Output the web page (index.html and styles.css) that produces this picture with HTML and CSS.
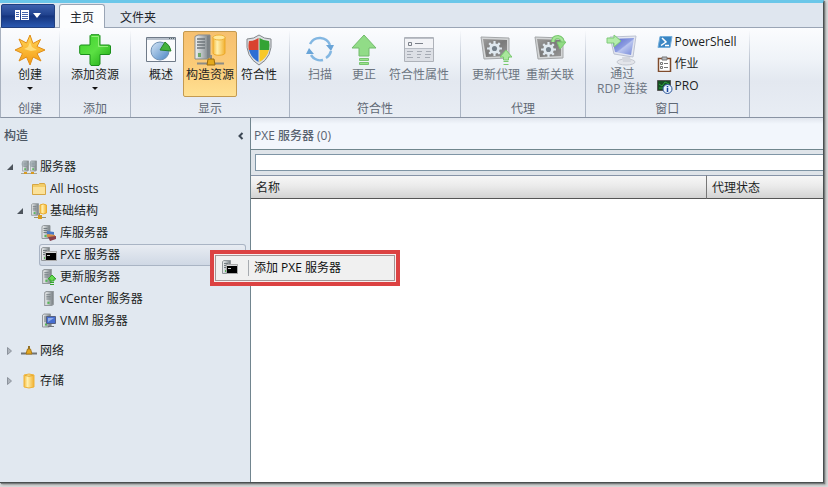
FILE: index.html
```html
<!DOCTYPE html>
<html lang="zh-CN">
<head>
<meta charset="utf-8">
<meta name="viewport" content="width=device-width, initial-scale=1">
<title>PXE 服务器</title>
<link rel="stylesheet" href="styles.css">
</head>
<body>
<svg class="sprite" aria-hidden="true">
  <defs>
    <linearGradient id="g-sun" x1="0" y1="0" x2="0" y2="1"><stop offset="0" stop-color="#ffd75a"/><stop offset="1" stop-color="#f59a12"/></linearGradient>
    <linearGradient id="g-green" x1="0" y1="0" x2="1" y2="1"><stop offset="0" stop-color="#3fd32c"/><stop offset=".5" stop-color="#5be043"/><stop offset="1" stop-color="#17a30f"/></linearGradient>
    <linearGradient id="g-blue" x1="0" y1="0" x2="1" y2="1"><stop offset="0" stop-color="#d5e6f6"/><stop offset="1" stop-color="#4c86c4"/></linearGradient>
    <linearGradient id="g-metal" x1="0" y1="0" x2="1" y2="0"><stop offset="0" stop-color="#f1f3f4"/><stop offset=".5" stop-color="#b4babd"/><stop offset="1" stop-color="#737a7e"/></linearGradient>
    <linearGradient id="g-disk" x1="0" y1="0" x2="1" y2="0"><stop offset="0" stop-color="#f6b93a"/><stop offset=".35" stop-color="#fff0ae"/><stop offset="1" stop-color="#f2b130"/></linearGradient>
    <linearGradient id="g-screen" x1="0" y1="0" x2="1" y2="1"><stop offset="0" stop-color="#5568c8"/><stop offset=".5" stop-color="#8d9de2"/><stop offset=".55" stop-color="#b9c5ef"/><stop offset="1" stop-color="#7488d8"/></linearGradient>
    <linearGradient id="g-dark" x1="0" y1="0" x2="1" y2="1"><stop offset="0" stop-color="#9b9b9b"/><stop offset=".5" stop-color="#7b7b7b"/><stop offset="1" stop-color="#979797"/></linearGradient>
    <symbol id="tower" viewBox="0 0 9 14">
      <path d="M.5 1.500 2 .5h6.500v12L7 13.500H.5z" fill="url(#g-metal)" stroke="#92989c"/>
      <path d="M2 3.500h4M2 5.500h4M2 7.500h4" stroke="#737c81"/><path d="M3 10h2v2H3z" fill="#55b857"/>
    </symbol>
    <symbol id="gear" viewBox="0 0 16 16">
      <path d="M7 1h2v2.200l1.600.6L12.200 2.200l1.500 1.600-1.500 1.500.7 1.700H15v2h-2.100l-.7 1.700 1.500 1.500-1.500 1.500-1.600-1.500-1.600.7V15H7v-2.100l-1.600-.7-1.600 1.500-1.500-1.500 1.500-1.500L3.100 9H1V7h2.100l.7-1.700-1.500-1.500 1.500-1.600 1.600 1.600L7 3.200z" fill="#dfe8ef"/>
      <circle cx="8" cy="8" r="2.400" fill="#75818b"/>
    </symbol>
  </defs>
</svg>

<div class="window">
  <nav class="tabs" aria-label="功能区">
    <button class="file-button" type="button" aria-label="文件">
      <svg width="26" height="12" viewBox="0 0 26 12"><path fill="#fff" d="M0 1h5v10H0zM6 1h8v10H6z"/><path stroke="#4464ac" d="M1 3.500h3M1 5.500h3M1 7.500h3M7 3.500h6M7 5.500h6M7 7.500h6M7 9.500h6"/><path fill="#fff" d="M18 4h8l-4 5z"/></svg>
    </button>
    <button class="tab tab-active" type="button">主页</button>
    <button class="tab" type="button">文件夹</button>
  </nav>

  <div class="ribbon">
    <section class="group">
      <div class="tools">
        <button class="tool" type="button">
          <svg class="icon" viewBox="0 0 32 32"><path d="m16 1 3 8.500L26.500 5.500 23 12.500 31 16l-8 3.500 4 7.500-8-4L16 31l-3.500-8L5 27l3.500-7.500L1 16l7.500-3.500L5 5l7.500 4z" fill="url(#g-sun)" stroke="#e08d18"/><path d="m16 8 2 5 5 3-6 1-7-2 4-2z" fill="#ffe995" opacity=".7"/></svg>
          <span>创建</span><i class="caret"></i>
        </button>
      </div>
      <h2>创建</h2>
    </section>
    <section class="group">
      <div class="tools">
        <button class="tool" type="button">
          <svg class="icon" viewBox="0 0 32 32"><path d="M12 .7h8l1 1V11h9.500l1 1v7l-1 1.500H21V30l-1 1.500h-8L11 30v-9.500H1.500L.7 19v-7l.8-1H11V1.700z" fill="url(#g-green)" stroke="#1b8f1b"/><path d="M12.500 2.500h7v10h9.500" fill="none" stroke="#a5f38b" opacity=".8"/></svg>
          <span>添加资源</span><i class="caret"></i>
        </button>
      </div>
      <h2>添加</h2>
    </section>
    <section class="group">
      <div class="tools">
        <button class="tool" type="button">
          <svg class="icon" viewBox="0 0 32 32"><path d="M1.500 3.500h29v24h-29z" fill="#fafbfd" stroke="#6f7a88"/><path d="M2 4h28v2H2z" fill="#b7c0cb"/><path d="M24 4.500h1m1 0h1m1 0h1" stroke="#566"/><circle cx="15" cy="17" r="9" fill="url(#g-blue)" stroke="#6f91b5"/><path d="M15 16 20 8q5 3 6 9z" fill="#44b23c" stroke="#27852a"/></svg>
          <span>概述</span>
        </button>
        <button class="tool tool-pressed" type="button" aria-pressed="true">
          <svg class="icon" viewBox="0 0 32 32"><path d="M1 2.500 4 1h12v22l-3 2H1z" fill="url(#g-metal)" stroke="#858a8d"/><path d="M3 5h8M3 8h8M3 11h8M3 14h8" stroke="#6d767b" stroke-width="1.500"/><path d="M14 2v22" stroke="#7c8387" stroke-width="2"/><path d="M4 19h3v4H4z" fill="#6fa86b"/><path d="M19 3v16c0 3 12 3 12 0V3z" fill="url(#g-disk)" stroke="#eca92a"/><ellipse cx="25" cy="3.500" rx="6" ry="2.500" fill="#ffe99d" stroke="#edb339"/><path d="M3 29.500h27M17 21v5" stroke="#8c8c86" stroke-width="2"/><path d="m13 31 1-6h6l1 6z" fill="#e4a91d" stroke="#9a6b0d"/></svg>
          <span>构造资源</span>
        </button>
        <button class="tool" type="button">
          <svg class="icon" viewBox="0 0 32 32"><path d="M16 1q5 4 12 4 2 18-12 26Q2 23 4 5q7 0 12-4z" fill="#dcdfe2" stroke="#83878c"/><path d="M15.500 4v12H5.800Q5 11 6 7q5 0 9.500-3z" fill="#d9432f"/><path d="M16.500 4q4.500 3 9.500 3 1 4 .2 9h-9.700z" fill="#34a334"/><path d="M6 16h9.500v12Q8 24 6 16z" fill="#2d6ed4"/><path d="M26 16h-9.500v12Q24 24 26 16z" fill="#f8c829"/></svg>
          <span>符合性</span>
        </button>
      </div>
      <h2>显示</h2>
    </section>
    <section class="group">
      <div class="tools">
        <button class="tool" type="button" disabled>
          <svg class="icon" viewBox="0 0 32 32"><path d="M6 10A11 11 0 0 1 26 11M27 17a11 11 0 0 1-5 7M19 26a11 11 0 0 1-12-5" fill="none" stroke="#83b7e2" stroke-width="2.500"/><path d="M22 11h8l-3 6zM2 20l3-6 5 6z" fill="#6aa5d8"/></svg>
          <span>扫描</span>
        </button>
        <button class="tool" type="button" disabled>
          <svg class="icon" viewBox="0 0 32 32"><path d="M16 1 28 14h-7v8H11v-8H4z" fill="#91dc87" stroke="#72bb6c"/><path d="M11.500 24.500h9v2h-9zM11.500 28.500h9v2h-9z" fill="#9ae48c" stroke="#78c470"/></svg>
          <span>更正</span>
        </button>
        <button class="tool" type="button" disabled>
          <svg class="icon" viewBox="0 0 32 32"><path d="M1.500 3.500h29v24h-29z" fill="#f2f3f6" stroke="#aeb2b9"/><path d="M2 14h28v13H2z" fill="#dcdfe5"/><path d="M2 4.500h28" stroke="#bbbfc7"/><path d="M5.500 8.500h3v3h-3zM12 9.500h8" fill="none" stroke="#7b8089"/><path d="M4 17.500h6m4 0h5m4 0h5M4 20.500h4m6 0h4m4 0h6M4 23.500h6m4 0h3m5 0h5" stroke="#a6abb4"/><path d="M2 14.500h28" stroke="#b8bdc5"/></svg>
          <span>符合性属性</span>
        </button>
      </div>
      <h2>符合性</h2>
    </section>
    <section class="group">
      <div class="tools">
        <button class="tool" type="button" disabled>
          <svg class="icon" viewBox="0 0 32 32"><path d="m1 3 28 1v20L4 25z" fill="#d3d5d6" stroke="#a4a7a9"/><path d="m3 5 24 1v16L6 23z" fill="url(#g-dark)"/><use href="#gear" x="6" y="6" width="17" height="17"/><path d="m26 16 6 7h-3.500v3h-5v-3H20zM23.500 27.500h5m-5 3h5" fill="#a9e79c" stroke="#79c96f"/></svg>
          <span>更新代理</span>
        </button>
        <button class="tool" type="button" disabled>
          <svg class="icon" viewBox="0 0 32 32"><path d="m1 3 28 1v20L4 25z" fill="#d3d5d6" stroke="#a4a7a9"/><path d="m3 5 24 1v16L6 23z" fill="url(#g-dark)"/><use href="#gear" x="6" y="7" width="17" height="17"/><path d="M19 8q0-5 5-5 5 1 5 7" fill="none" stroke="#78c96e" stroke-width="4"/><path d="M19 8q0-5 5-5 5 1 5 7" fill="none" stroke="#a6e59a" stroke-width="2"/><path d="M23 8h9l-6 7z" fill="#91db84" stroke="#78c96e"/></svg>
          <span>重新关联</span>
        </button>
      </div>
      <h2>代理</h2>
    </section>
    <section class="group">
      <div class="tools">
        <button class="tool" type="button" disabled>
          <svg class="icon" viewBox="0 0 32 32"><ellipse cx="20" cy="28" rx="9" ry="3" fill="#e3e5ea" stroke="#c4c8d0"/><path d="m16 23 8-1 1 6h-8z" fill="#d4d7de"/><path d="m4 3 26-1-3 21-19-3z" fill="#e3e6f0" stroke="#bcc2d2"/><path d="m6 5 22-1-3 17-16-3z" fill="url(#g-screen)"/><path d="M1 4h7V1l7 6-7 6V9H1z" fill="#b4edab" stroke="#80ca7a"/></svg>
          <span class="two-line">通过<br>RDP 连接</span>
        </button>
        <div class="list">
          <button class="list-tool" type="button"><svg width="16" height="16" viewBox="0 0 16 16"><path d="M3 2.500h12L13 13.500H1z" fill="#3a86c4" stroke="#74aedb"/><path d="m5 4 4 4-5 3.500M8 11.500h4" fill="none" stroke="#fff" stroke-width="1.500"/></svg>PowerShell</button>
          <button class="list-tool" type="button"><svg width="16" height="16" viewBox="0 0 16 16"><path d="M1.500 2.500h12v13h-12z" fill="#fff" stroke="#7f4b2c" stroke-width="1.500"/><path d="M5 1h5v3H5z" fill="#b9bdc2" stroke="#777"/><path d="M3.500 6.500h2v2h-2zM3.500 10.500h2v2h-2z" fill="none" stroke="#777"/><path d="M7 7.500h4m-4 4h4" stroke="#777"/></svg>作业</button>
          <button class="list-tool" type="button"><svg width="16" height="16" viewBox="0 0 16 16"><path d="M.5 2.500h13v10H.5z" fill="#174d22" stroke="#555"/><path d="m2 6 3 2 3-4 4 2M2 10h5" fill="none" stroke="#2fa341"/><circle cx="10.500" cy="11" r="4.500" fill="#e9f2fc" stroke="#2d579b"/><path d="M10.500 8v1.200M10.500 10v4" stroke="#17419a" stroke-width="1.500"/></svg>PRO</button>
        </div>
      </div>
      <h2>窗口</h2>
    </section>
  </div>

  <div class="workspace">
    <aside class="sidebar">
      <header class="sidebar-head">
        <h1>构造</h1>
        <button class="collapse" type="button" aria-label="折叠"><svg width="6" height="8" viewBox="0 0 6 8"><path d="M4.500 1 1.500 4l3 3" fill="none" stroke="#3c4754" stroke-width="2"/></svg></button>
      </header>
      <ul class="tree">
        <li>
          <a class="node" href="#"><svg class="twist" viewBox="0 0 8 8"><path d="M7 1v6H1z" fill="#4d545c"/></svg><svg class="mini" viewBox="0 0 16 16"><use href="#tower" x="1" y="1" width="7" height="12"/><use href="#tower" x="9" y="1" width="7" height="12"/><circle cx="3.500" cy="5" r="3" fill="#9aa7ad" opacity=".7"/><circle cx="11.500" cy="5" r="3" fill="#9aa7ad" opacity=".7"/><path d="M0 14.500h16" stroke="#a9a58f"/><path d="M3 13h3v2H3zM10 13h3v2h-3z" fill="#d89a20"/></svg>服务器</a>
          <ul>
            <li><a class="node" href="#"><span class="twist"></span><svg class="mini" viewBox="0 0 16 16"><path d="M1.500 3.500h6l1-1h5l1 2v9h-13z" fill="#f3cd68" stroke="#d6a643"/><path d="M2 6h12v7H2z" fill="#fbe29a"/></svg>All Hosts</a></li>
            <li>
              <a class="node" href="#"><svg class="twist" viewBox="0 0 8 8"><path d="M7 1v6H1z" fill="#4d545c"/></svg><svg class="mini" viewBox="0 0 16 16"><use href="#tower" x="0" y="0" width="8" height="13"/><path d="M9 2q3-2 6.500 0v8q-3 2-6.500 0z" fill="url(#g-disk)" stroke="#e9ab2d"/><path d="M3 14.500h12M8.500 10v3" stroke="#9b926f"/><path d="M7 12h4v4H7z" fill="#d79b1d"/></svg>基础结构</a>
              <ul>
                <li><a class="node" href="#"><span class="twist"></span><svg class="mini" viewBox="0 0 16 16"><use href="#tower" x="0" y="0" width="10" height="14"/><path d="m6 6 7 1v3l-7-1z" fill="#4a79c4"/><path d="m6 9 8 1v3l-8-1z" fill="#d78d45"/><path d="m7 12 8-1v3l-6 2z" fill="#873f4b"/></svg>库服务器</a></li>
                <li class="anchor">
                  <a class="node node-selected" href="#"><svg class="mini" viewBox="0 0 16 16"><use href="#tower" x="0" y="0" width="9" height="14"/><path d="M4.500 4.500h11v9h-11z" fill="#000" stroke="#aaa"/><path d="M5 5.500h10" stroke="#d9dadb"/><path d="M6 8.500h3" stroke="#ccc"/></svg>PXE 服务器</a>
                  <div class="menu-frame">
                    <div class="menu" role="menu">
                      <button class="menu-item" type="button" role="menuitem"><svg class="mini" viewBox="0 0 16 16"><use href="#tower" x="0" y="0" width="9" height="14"/><path d="M4.500 4.500h11v9h-11z" fill="#000" stroke="#aaa"/><path d="M5 5.500h10" stroke="#d9dadb"/><path d="M6 8.500h3" stroke="#ccc"/></svg><span class="menu-label">添加 PXE 服务器</span></button>
                    </div>
                  </div>
                </li>
                <li><a class="node" href="#"><span class="twist"></span><svg class="mini" viewBox="0 0 16 16"><use href="#tower" x="1" y="0" width="10" height="15"/><path d="m11 6 4 4h-2v2H9v-2H7zM9 13.500h4M9 15.500h4" fill="#66d951" stroke="#35a52c"/></svg>更新服务器</a></li>
                <li><a class="node" href="#"><span class="twist"></span><svg class="mini" viewBox="0 0 16 16"><use href="#tower" x="3" y="0" width="10" height="15"/></svg>vCenter 服务器</a></li>
                <li><a class="node" href="#"><span class="twist"></span><svg class="mini" viewBox="0 0 16 16"><use href="#tower" x="1" y="0" width="9" height="15"/><path d="M5.500 3.500h9v7h-9z" fill="#466ed0" stroke="#566181"/><path d="m7 5 6 0-6 4z" fill="#92aee9"/><path d="M10 11v2m-3 .500h6" stroke="#6f7479"/></svg>VMM 服务器</a></li>
              </ul>
            </li>
          </ul>
        </li>
        <li><a class="node node-root" href="#"><svg class="twist" viewBox="0 0 8 8"><path d="M1.500.5v7l4-3.500z" fill="#aeb4bc" stroke="#8c939c"/></svg><svg class="mini" viewBox="0 0 16 16"><path d="M0 10.500h16" stroke="#6f7375" stroke-width="2"/><path d="m5 11 1.500-5h3L11 11z" fill="#e3a71f" stroke="#a87819"/><path d="M8 3v3" stroke="#94732a" stroke-width="2"/></svg>网络</a></li>
        <li><a class="node node-root" href="#"><svg class="twist" viewBox="0 0 8 8"><path d="M1.500.5v7l4-3.500z" fill="#aeb4bc" stroke="#8c939c"/></svg><svg class="mini" viewBox="0 0 16 16"><path d="M3 2q5-2 10 0v12q-5 2-10 0z" fill="url(#g-disk)" stroke="#eeb33a"/><path d="M4 2.500q4 1.500 8 0" fill="none" stroke="#e4a82d"/></svg>存储</a></li>
      </ul>
    </aside>

    <main class="content">
      <h1 class="content-title">PXE 服务器 (0)</h1>
      <div class="search"><input type="text" aria-label="搜索"></div>
      <table class="results">
        <thead><tr><th class="col-name" scope="col">名称</th><th scope="col">代理状态</th></tr></thead>
      </table>
    </main>
  </div>
</div>
</body>
</html>
```
FILE: styles.css
```css
* { box-sizing: border-box; }

body {
  margin: 0;
  height: 100vh;
  padding: 0 4px 4px 0;
  background: #d8d9d9;
  color: #1c1f24;
  font: 12px/16px "Open Sans", "Noto Sans CJK SC", sans-serif;
  overflow: hidden;
}

h1, h2 { margin: 0; font-size: 12px; font-weight: 400; }
ul { margin: 0; padding: 0; list-style: none; }
a { color: inherit; text-decoration: none; }
button { margin: 0; padding: 0; border: 0; background: none; color: inherit; font: inherit; }
svg { display: block; flex: none; }

.sprite { position: absolute; width: 0; height: 0; }

.window {
  display: flex;
  flex-direction: column;
  height: 100%;
  border-top: 3px solid #6bc7e9;
  border-right: 1px solid #4a4f50;
  border-bottom: 1px solid #4a4f50;
  background: #e1e8f0;
  box-shadow: 1px 1px 1px #777b7b, 2px 2px 2px #a5a7a7;
}

/* Tab strip */
.tabs {
  display: flex;
  flex: none;
  height: 25px;
  padding: 1px 0 0 1px;
  background: #dfe6ef;
  box-shadow: inset 0 -1px #9aa5b5;
}

.file-button {
  display: flex;
  align-items: center;
  justify-content: center;
  width: 54px;
  margin-right: 4px;
  border: 1px solid #203f80;
  border-radius: 2px 2px 0 0;
  background: linear-gradient(#3d61ad, #20428e 45%, #15347d 50%, #2a58b0);
}
.file-button svg { margin-bottom: 2px; }

.tab { padding: 3px 15px 0; color: #20242b; }
.tab-active {
  padding: 2px 10px 0;
  border: 1px solid #9aa5b5;
  border-bottom: 0;
  border-radius: 3px 3px 0 0;
  background: #fcfdfe;
}

/* Ribbon */
.ribbon {
  display: flex;
  flex: none;
  height: 90px;
  padding-top: 3px;
  border-left: 1px solid #a8b1bf;
  border-bottom: 1px solid #8993a3;
  background: linear-gradient(#fbfcfe, #eff3f8 35%, #e3e8f0 60%, #e8edf4);
}

.group {
  display: flex;
  flex-direction: column;
  padding: 0 8px;
  border-right: 1px solid;
  border-image: linear-gradient(#b4bdcb00, #b4bdcb 40%, #aab4c3) 1;
}
.group:first-child { padding: 0 7px; }
.group h2 { padding-top: 4px; color: #5f6874; text-align: center; }

.tools { display: flex; height: 66px; }

.tool {
  display: flex;
  flex-direction: column;
  align-items: center;
  min-width: 44px;
  padding: 3px;
  border-radius: 2px;
}
.tool:disabled { color: #6c7581; }
.tool-pressed {
  padding: 2px;
  border: 1px solid #c49a50;
  background: linear-gradient(#f6c070, #fbcb78 50%, #ffe193);
}
.icon { width: 32px; height: 32px; }
.tool span { margin-top: 1px; }
.tool .two-line { margin-top: 0; line-height: 15px; }

.caret {
  margin-top: 4px;
  border: 3px solid transparent;
  border-top-color: #111;
  border-bottom: 0;
}

.list { display: flex; flex-direction: column; padding: 0 4px 0 6px; }
.list-tool { display: flex; align-items: center; gap: 2px; height: 22px; }

/* Workspace */
.workspace { display: flex; flex: 1; min-height: 0; }

.sidebar { flex: none; width: 250px; padding-top: 4px; background: #e1e8f0; }

.sidebar-head {
  display: flex;
  align-items: center;
  justify-content: space-between;
  height: 27px;
  padding: 0 6px 0 4px;
  color: #4c5663;
}
.sidebar-head h1 { font-weight: 500; }

.tree { padding: 7px 4px 0 5px; }
.tree ul { padding-left: 10px; }

.node {
  display: flex;
  align-items: center;
  height: 22px;
  padding-left: 1px;
}
.node-root { height: 30px; }
.tree > li:nth-child(2) { margin-top: 4px; }
.twist { width: 8px; height: 8px; margin-right: 7px; }
.mini { width: 16px; height: 16px; margin-right: 3px; }

.anchor { position: relative; }
.node-selected {
  margin-left: 14px;
  padding-left: 2px;
  border-radius: 3px;
  background: linear-gradient(#e9edf3, #ced7e4);
  box-shadow: inset 0 0 0 1px #a9b4c4;
}

/* Context menu laid over the tree and the results */
.menu-frame {
  position: absolute;
  z-index: 2;
  top: 6px;
  left: 185px;
  padding: 1px;
  border: 4px solid #dc4242;
  background: #f8eeee;
}
.menu { border: 1px solid #a29696; background: #f0f0f0; }
.menu-item { display: flex; align-items: center; width: 178px; height: 24px; padding-left: 6px; }
.menu-item .mini { margin-right: 10px; }
.menu-label {
  padding-left: 5px;
  border-left: 1px solid #a7abb0;
  color: #111;
}

/* Results */
.content {
  display: flex;
  flex: 1;
  flex-direction: column;
  min-width: 0;
  border-left: 1px solid #71858f;
  background: #fff;
}

.content-title {
  flex: none;
  height: 31px;
  padding: 10px 3px 0;
  background: linear-gradient(#e1e6ee, #f2f6fc 6px);
  color: #596270;
  font-weight: 500;
}

.search {
  flex: none;
  padding: 4px 0 4px 4px;
  border-top: 1px solid #70868d;
  background: #dfe4e9;
}
.search input {
  display: block;
  width: 100%;
  height: 17px;
  padding: 0 4px;
  border: 1px solid #7f95a5;
  border-right: 0;
  background: #fff;
  font: inherit;
}

.results { width: 100%; border-collapse: separate; border-spacing: 0; table-layout: fixed; }
.results th {
  height: 24px;
  padding: 2px 5px 0;
  border-top: 1px solid #8794a8;
  border-bottom: 1px solid #555;
  background: linear-gradient(#f7f7f7, #ebebeb 45%, #d3d3d3);
  font-weight: 400;
  text-align: left;
}
.results .col-name { width: 456px; border-right: 1px solid #777; }
```
